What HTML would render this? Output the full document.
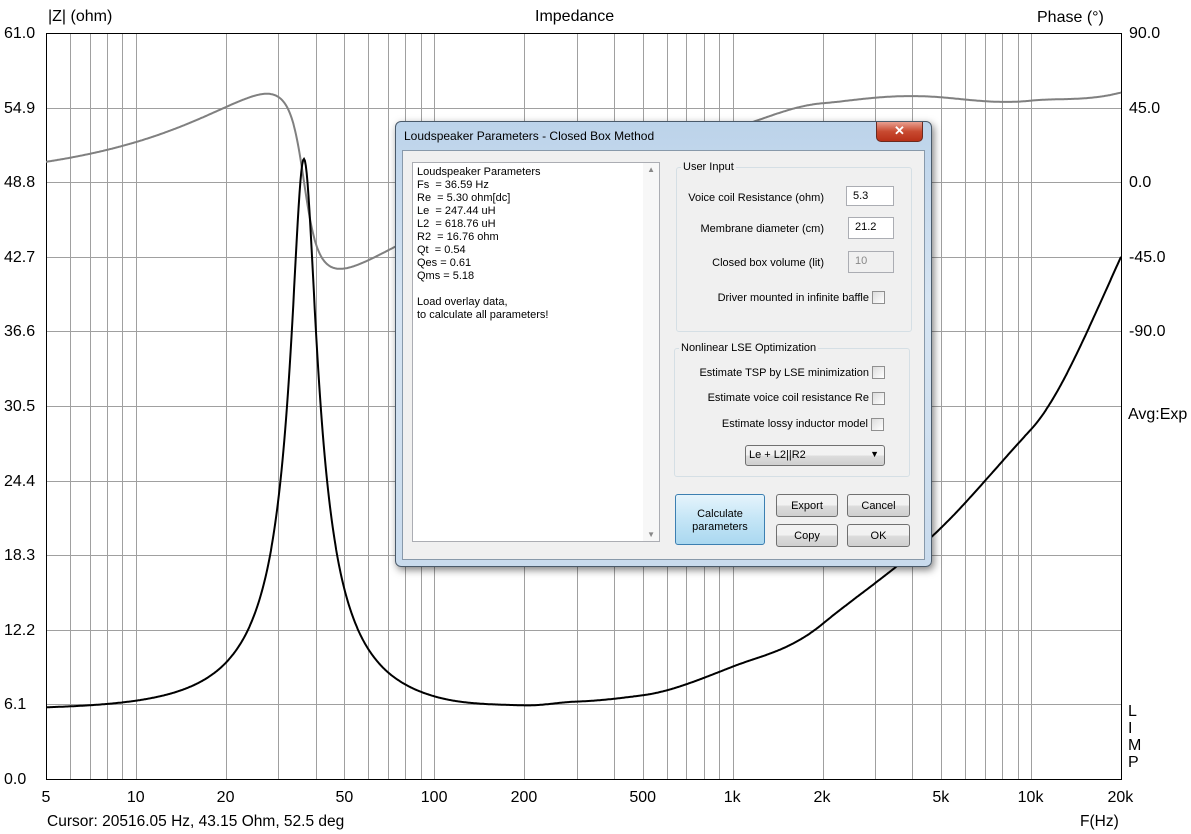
<!DOCTYPE html>
<html><head><meta charset="utf-8"><style>
body{margin:0;width:1191px;height:834px;background:#fff;position:relative;overflow:hidden;font-family:"Liberation Sans",Arial,sans-serif}
.t{position:absolute;white-space:nowrap;color:#000}
.ax{font-size:16px}
#dlg{position:absolute;left:395px;top:121px;width:535px;height:444px;border-radius:6px;background:linear-gradient(#bcd3ea,#d6e4f2 40%,#c9dbed);border:1px solid #4a5a6a;box-shadow:2px 3px 8px rgba(0,0,0,.5);}
.d{position:absolute;font-size:11px;white-space:nowrap}
.grp{position:absolute;border:1px solid #d5dfe5;border-radius:3px}
.inp{position:absolute;background:#fff;border:1px solid #abadb3;font-size:11px;padding:3px 0 0 6px;box-sizing:border-box}
.cb{position:absolute;width:11px;height:11px;border:1px solid #8f8f8f;background:linear-gradient(135deg,#dcdcdc,#fff)}
.btn{position:absolute;border:1px solid #707070;border-radius:3px;background:linear-gradient(#f2f2f2 50%,#dddddd 50%,#cfcfcf);font-size:11px;text-align:center;box-sizing:border-box}
</style></head><body>
<svg id="plot" width="1191" height="834" style="position:absolute;left:0;top:0"></svg>
<div class="t ax" style="left:48px;top:8px">|Z| (ohm)</div>
<div class="t ax" style="left:535px;top:8px">Impedance</div>
<div class="t ax" style="left:1037px;top:9px">Phase (°)</div>
<div id="labels"></div>
<div class="t ax" style="left:1128px;top:406px">Avg:Exp</div>
<div class="t ax" style="left:1128px;top:703px;line-height:17px">L<br>I<br>M<br>P</div>
<div class="t" style="left:47px;top:813px;font-size:15.5px">Cursor: 20516.05 Hz, 43.15 Ohm, 52.5 deg</div>
<div class="t" style="left:1080px;top:813px;font-size:15.5px">F(Hz)</div>

<div id="dlg">
 <div class="d" style="left:8px;top:7px;font-size:12px;color:#000">Loudspeaker Parameters - Closed Box Method</div>
 <div style="position:absolute;left:480px;top:0;width:45px;height:19px;border:1px solid #6b2a20;border-top:none;border-radius:0 0 5px 5px;background:linear-gradient(#e8a090,#c84a30 50%,#b83018);color:#fff;font-size:13px;font-weight:bold;text-align:center;line-height:18px">✕</div>
 <div style="position:absolute;left:6px;top:28px;width:521px;height:408px;background:#f0f0f0;border:1px solid #8899aa">
  <div style="position:absolute;left:9px;top:11px;width:246px;height:378px;background:#fff;border:1px solid #abadb3">
   <div class="d" style="left:4px;top:3px;line-height:13px">Loudspeaker Parameters<br>Fs&nbsp; = 36.59 Hz<br>Re&nbsp; = 5.30 ohm[dc]<br>Le&nbsp; = 247.44 uH<br>L2&nbsp; = 618.76 uH<br>R2&nbsp; = 16.76 ohm<br>Qt&nbsp; = 0.54<br>Qes = 0.61<br>Qms = 5.18<br><br>Load overlay data,<br>to calculate all parameters!</div>
   <div style="position:absolute;right:0;top:0;width:16px;height:100%;background:#f7f7f7"></div>
   <div class="d" style="right:4px;top:2px;font-size:8px;color:#888">▲</div>
   <div class="d" style="right:4px;bottom:2px;font-size:8px;color:#888">▼</div>
  </div>
  <div class="grp" style="left:273px;top:16px;width:234px;height:163px"></div>
  <div class="d" style="left:278px;top:10px;background:#f0f0f0;padding:0 2px">User Input</div>
  <div class="d" style="right:100px;top:41px">Voice coil Resistance (ohm)</div>
  <div class="inp" style="left:443px;top:35px;width:48px;height:20px">5.3</div>
  <div class="d" style="right:100px;top:72px">Membrane diameter (cm)</div>
  <div class="inp" style="left:445px;top:66px;width:46px;height:22px">21.2</div>
  <div class="d" style="right:100px;top:106px">Closed box volume (lit)</div>
  <div class="inp" style="left:445px;top:100px;width:46px;height:22px;background:#f0f0f0;color:#888">10</div>
  <div class="d" style="right:55px;top:141px">Driver mounted in infinite baffle</div>
  <div class="cb" style="left:469px;top:140px"></div>
  <div class="grp" style="left:271px;top:197px;width:234px;height:127px"></div>
  <div class="d" style="left:276px;top:191px;background:#f0f0f0;padding:0 2px">Nonlinear LSE Optimization</div>
  <div class="d" style="right:55px;top:216px">Estimate TSP by LSE minimization</div>
  <div class="cb" style="left:469px;top:215px"></div>
  <div class="d" style="right:55px;top:241px">Estimate voice coil resistance Re</div>
  <div class="cb" style="left:469px;top:241px"></div>
  <div class="d" style="right:56px;top:267px">Estimate lossy inductor model</div>
  <div class="cb" style="left:468px;top:267px"></div>
  <div class="btn" style="left:342px;top:294px;width:140px;height:21px;text-align:left;padding:3px 0 0 3px">Le + L2||R2<span style="position:absolute;right:5px;top:3px;font-size:9px">▼</span></div>
  <div class="btn" style="left:272px;top:343px;width:90px;height:51px;border-color:#3c7fb1;background:linear-gradient(#e5f4fc,#c4e5f6 50%,#aad8f0);padding-top:13px;line-height:13px">Calculate<br>parameters</div>
  <div class="btn" style="left:373px;top:343px;width:62px;height:23px;padding-top:5px">Export</div>
  <div class="btn" style="left:444px;top:343px;width:63px;height:23px;padding-top:5px">Cancel</div>
  <div class="btn" style="left:373px;top:373px;width:62px;height:23px;padding-top:5px">Copy</div>
  <div class="btn" style="left:444px;top:373px;width:63px;height:23px;padding-top:5px">OK</div>
 </div>
</div>
<script>
var NS="http://www.w3.org/2000/svg",svg=document.getElementById('plot');
var X0=46,X1=1121,Y0=33,Y1=779,L5=Math.log10(5),LR=Math.log10(20000)-L5;
function fx(f){return X0+(Math.log10(f)-L5)/LR*(X1-X0);}
function el(t,a){var e=document.createElementNS(NS,t);for(var k in a)e.setAttribute(k,a[k]);svg.appendChild(e);return e;}
el('rect',{x:0,y:0,width:1191,height:834,fill:'#fff'});
var g='';
[5,6,7,8,9].forEach(function(m){[1,10,100,1000].forEach(function(d){var f=m*d;if(f>5&&f<20000){var x=Math.round(fx(f))+.5;g+='M'+x+' '+Y0+'V'+Y1;}})});
[1,2,3,4].forEach(function(m){[10,100,1000,10000].forEach(function(d){var f=m*d;if(f<20000){var x=Math.round(fx(f))+.5;g+='M'+x+' '+Y0+'V'+Y1;}})});
for(var i=1;i<10;i++){var y=Math.round(Y1-i*(Y1-Y0)/10)+.5;g+='M'+X0+' '+y+'H'+X1;}
el('path',{d:g,stroke:'#a0a0a0','stroke-width':1,fill:'none'});
el('rect',{x:X0+.5,y:Y0+.5,width:X1-X0,height:Y1-Y0,fill:'none',stroke:'#000','stroke-width':1});
var lab='';
for(var i=0;i<=10;i++){var y=Y1-i*(Y1-Y0)/10;lab+='<div class="t ax" style="left:4px;top:'+(y-8)+'px">'+(i*6.1).toFixed(1)+'</div>';}
var ph=[90,45,0,-45,-90];ph.forEach(function(p,i){var y=Y0+i*(Y1-Y0)/10;lab+='<div class="t ax" style="left:1129px;top:'+(y-8)+'px">'+p.toFixed(1)+'</div>';});
var xl=[[5,'5'],[10,'10'],[20,'20'],[50,'50'],[100,'100'],[200,'200'],[500,'500'],[1000,'1k'],[2000,'2k'],[5000,'5k'],[10000,'10k'],[20000,'20k']];
xl.forEach(function(a){var x=fx(a[0]);var w=a[1].length*9;lab+='<div class="t ax" style="left:'+(x-w/2)+'px;top:789px">'+a[1]+'</div>';});
document.getElementById('labels').innerHTML=lab;
var Re=5.3,Le=247.44e-6,L2=618.76e-6,R2=16.76,fs=36.59,Qms=5.18,Qes=0.61,Rm=Re*Qms/Qes;
var corr=[[5,0.4],[100,0.4],[200,0.6],[300,0.9],[500,1.0],[1000,1.6],[2000,0.3],[5000,-2.0],[10000,-0.7],[20000,3.8]];
function dc(f){var lf=Math.log10(f);for(var i=0;i<corr.length-1;i++){var a=Math.log10(corr[i][0]),b=Math.log10(corr[i+1][0]);if(lf<=b){var t=(lf-a)/(b-a);t=t*t*(3-2*t);return corr[i][1]+t*(corr[i+1][1]-corr[i][1]);}}return corr[corr.length-1][1];}
var pz='',pp='';
for(var i=0;i<=1200;i++){var f=5*Math.pow(4000,i/1200),w=2*Math.PI*f;
 var t=Qms*(f/fs-fs/f),den=1+t*t,mr=Rm/den,mi=-Rm*t/den;
 var xl2=w*L2,pr=R2*xl2*xl2/(R2*R2+xl2*xl2),pi=R2*R2*xl2/(R2*R2+xl2*xl2);
 var zr=Re+mr+pr+dc(f),zi=w*Le+mi+pi;
 var Z=Math.hypot(zr,zi),P=Math.atan2(zi,zr)*180/Math.PI;
 var x=fx(f).toFixed(1);
 pz+=(i?'L':'M')+x+' '+(Y1-Z/61*(Y1-Y0)).toFixed(1);
 var yp=182-P/45*74.6; yp=Math.max(Y0,yp);
 pp+=(i?'L':'M')+x+' '+yp.toFixed(1);}
el('path',{d:pp,stroke:'#808080','stroke-width':2,fill:'none'});
el('path',{d:pz,stroke:'#000','stroke-width':2,fill:'none'});
</script>
</body></html>
